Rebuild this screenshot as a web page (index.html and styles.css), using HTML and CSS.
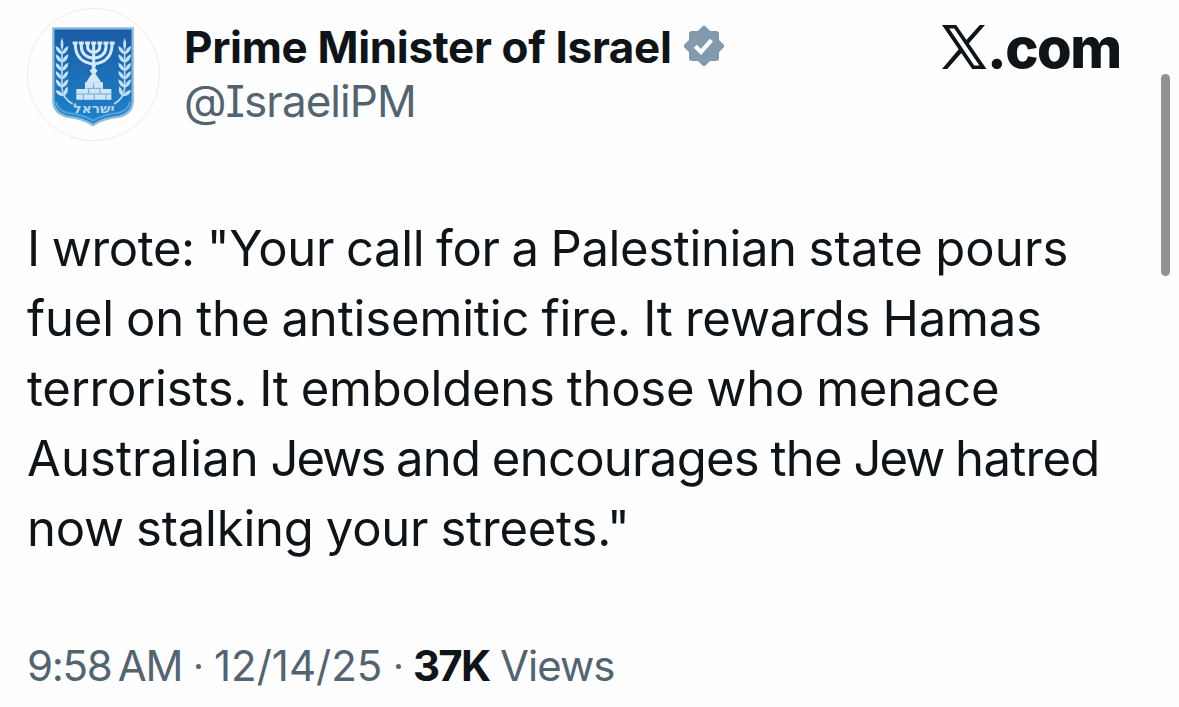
FILE: index.html
```html
<!DOCTYPE html>
<html lang="en">
<head>
<meta charset="utf-8">
<title>Prime Minister of Israel on X</title>
<link rel="stylesheet" href="styles.css">
</head>
<body>
<article class="post">
  <header class="header">
    <div class="avatar">
      <svg class="emblem" viewBox="0 0 282 336" aria-hidden="true">
        <defs>
          <linearGradient id="shield" x1="0" y1="0" x2="0" y2="1">
            <stop offset="0" stop-color="#1a5da6"/>
            <stop offset="1" stop-color="#1f83cb"/>
          </linearGradient>
          <g id="leaves">
            <path d="M0 0q-19-5-19-25q16 5 19 25zM0 0q19-5 19-25q-16 5-19 25z"/>
          </g>
          <g id="branch">
            <path d="M48 92V205Q50 235 80 252" fill="none" stroke="#b9d9f0" stroke-width="5"/>
            <path d="M48 92q-9-19 0-38q9 19 0 38z"/>
            <use href="#leaves" x="48" y="103"/>
            <use href="#leaves" x="48" y="128"/>
            <use href="#leaves" x="48" y="153"/>
            <use href="#leaves" x="48" y="178"/>
            <use href="#leaves" x="48" y="203"/>
            <use href="#leaves" transform="translate(54 229) rotate(-18)"/>
          </g>
        </defs>
        <path d="M22 25H260V245Q259 278 222 289Q172 294 141 315Q110 294 60 289Q24 278 22 245Z" fill="url(#shield)" stroke="#8bbbdc" stroke-width="7"/>
        <path d="M30 245Q33 270 64 279Q112 284 141 302Q170 284 218 279Q249 270 252 245" fill="none" stroke="#4fa3dc" stroke-width="6"/>
        <g fill="#c4e0f3">
          <use href="#branch"/>
          <use href="#branch" transform="translate(284 0) scale(-1 1)"/>
        </g>
        <g fill="none" stroke="#d5e9f7" stroke-width="9">
          <path d="M88 72V78Q91 126 143 132Q195 126 198 78V72"/>
          <path d="M106 72V82Q108 110 143 115Q178 110 180 82V72"/>
          <path d="M125 72V84Q127 94 143 98Q159 94 161 84V72"/>
          <path d="M143 70V178"/>
          <path d="M80 69H206" stroke-width="9" stroke-dasharray="15 3.5"/>
        </g>
        <path d="M134 130h18l-5 14 8 8-7 9 12 17 6 10H120l6-10 12-17-7-9 8-8z" fill="#d5e9f7"/>
        <path d="M117 187H171V207H196V239H91V207H117Z" fill="#d0e6f5"/>
        <path d="M121 205H167M91 222H196M143 190V205M128 207V221M162 207V221M112 223V239M145 223V239M180 223V239" stroke="#6ca9d5" stroke-width="3"/>
        <text class="motto" x="144" y="278" text-anchor="middle" textLength="124" lengthAdjust="spacingAndGlyphs">ישראל</text>
      </svg>
    </div>
    <div class="author">
      <div class="name-row">
        <span class="name">Prime Minister of Israel</span>
        <svg class="badge" viewBox="0 0 40 40" aria-hidden="true">
          <g fill="#829aab">
            <rect x="5" y="5" width="30" height="30" rx="3"/>
            <rect x="5" y="5" width="30" height="30" rx="3" transform="rotate(45 20 20)"/>
          </g>
          <path d="M11.2 20.2L17 26L27.4 14.2" fill="none" stroke="#fff" stroke-width="4.2"/>
        </svg>
      </div>
      <div class="handle">@IsraeliPM</div>
    </div>
    <div class="brand">
      <svg class="brand-x" viewBox="0 0 45 44" aria-hidden="true">
        <path fill-rule="evenodd" d="M0 0H14.2L44.5 44H30.2ZM7.2 3.6L32.2 40.4H37.4L12.3 3.6Z"/>
        <path d="M37.8 0H43L26.6 18.8L24.1 15.2ZM0 44H5.2L20.7 26.4L18.2 22.6Z"/>
      </svg>
      <span class="brand-text">.com</span>
    </div>
  </header>
  <p class="body">
    <span class="line line-1">I wrote: "Your call for a Palestinian <span class="loose">state pours</span></span>
    <span class="line line-2">fuel on the antisemitic fire. It rewards Hamas</span>
    <span class="line line-3">terrorists. It emboldens those who menace</span>
    <span class="line line-4"><span class="loose">Australian</span> <span class="tight">Jews</span> and encourages the <span class="tight">Jew</span> hatred</span>
    <span class="line line-5">now stalking your streets."</span>
  </p>
  <footer class="meta">
    <span class="time">9:58&#8201;AM</span>
    <span class="dot"></span>
    <span class="date">12/14/25</span>
    <span class="dot"></span>
    <span class="count">37K</span>
    <span class="views">Views</span>
  </footer>
</article>
<div class="scrollbar"></div>
</body>
</html>
```
FILE: styles.css
```css
* { box-sizing: border-box; }

body {
  margin: 0;
  height: 707px;
  overflow: hidden;
  background: #fefefe;
  color: #0f1419;
  font-family: Inter, "Liberation Sans", sans-serif;
}

.post {
  height: 707px;
  padding: 8px 58px 0 27px;
  display: flex;
  flex-direction: column;
}

.header {
  display: flex;
  height: 206px;
  align-items: flex-start;
}

.avatar {
  width: 133px;
  height: 133px;
  flex: none;
  padding: 11px 0 0 18px;
  border: 1px solid #ececec;
  border-radius: 50%;
}

.emblem {
  display: block;
  width: 94px;
  height: 112px;
}

.motto {
  fill: #b5d8f0;
  font: 700 40px "DejaVu Sans", sans-serif;
}

.author {
  margin-left: 24px;
  padding-top: 12px;
  white-space: nowrap;
}

.name-row {
  display: flex;
  align-items: center;
  height: 54px;
}

.name {
  font-size: 44px;
  line-height: 54px;
  font-weight: 700;
  letter-spacing: -0.33px;
}

.badge {
  width: 40px;
  height: 40px;
  margin-left: 12px;
  margin-top: -2px;
  overflow: visible;
}

.handle {
  font-size: 44px;
  line-height: 54px;
  letter-spacing: -0.95px;
  color: #536471;
  font-feature-settings: "cv08";
}

.brand {
  display: flex;
  margin-left: auto;
  padding-top: 17px;
}

.brand-x {
  width: 45px;
  height: 44px;
  fill: #0f1419;
}

.brand-text {
  width: 134px;
  font-size: 56px;
  line-height: 46px;
  font-weight: 800;
  letter-spacing: -1.5px;
}

.body {
  margin: 0;
  display: flex;
  flex-direction: column;
  font-size: 49px;
  line-height: 70px;
  word-spacing: -1.5px;
  white-space: nowrap;
}

.line-1 { letter-spacing: -0.37px; }
.line-2 { letter-spacing: -0.15px; }
.line-3 { letter-spacing: -0.24px; }
.line-4 { letter-spacing: -0.72px; }
.line-5 { letter-spacing: -0.2px; }

.loose { letter-spacing: 0.1px; }
.tight { letter-spacing: -1.9px; }

.meta {
  display: flex;
  align-items: center;
  margin-top: 76px;
  height: 52px;
  font-size: 42px;
  line-height: 52px;
  color: #536471;
  white-space: nowrap;
}

.time { width: 157px; letter-spacing: -1.3px; }
.date { width: 171px; padding-left: 1px; }

.dot {
  width: 5px;
  height: 5px;
  margin: 0 12px;
  border-radius: 50%;
  background: #536471;
}

.count {
  width: 87px;
  font-weight: 700;
  letter-spacing: -1.8px;
  color: #0f1419;
}

.views { letter-spacing: -1px; }

.scrollbar {
  position: absolute;
  top: 74px;
  right: 9px;
  width: 9px;
  height: 202px;
  border-radius: 5px;
  background: #929292;
}
```
